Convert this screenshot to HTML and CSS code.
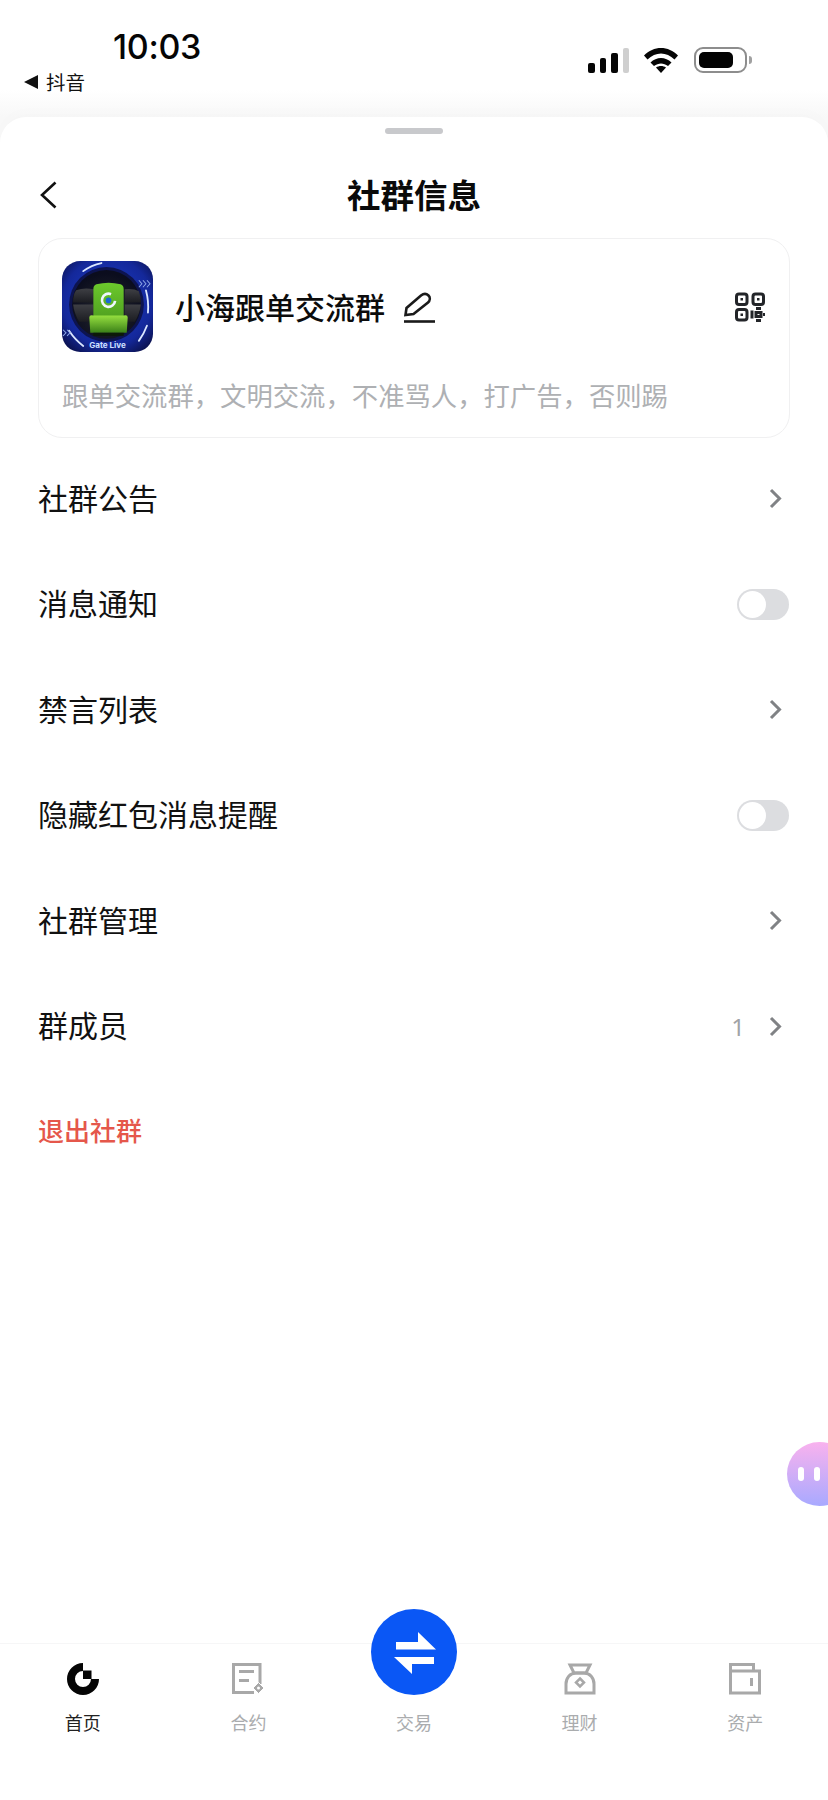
FILE: index.html
```html
<!DOCTYPE html>
<html lang="zh-CN">
<head>
<meta charset="utf-8">
<title>社群信息</title>
<link rel="stylesheet" href="styles.css">
</head>
<body>
<div class="screen">
  <header class="status">
    <div class="status-left">
      <div class="time">10:03</div>
      <div class="backapp"><span class="tri"></span><span>抖音</span></div>
    </div>
    <div class="status-right">
      <div class="signal"><i class="b1"></i><i class="b2"></i><i class="b3"></i><i class="b4"></i></div>
      <svg class="wifi" viewBox="0 0 35 26"><path d="M0.5 8.5C10 -1.5 25 -1.5 34.5 8.5L31 12.5C23 4.5 12 4.5 4 12.5Z"/><path d="M7 15.5C13 9.5 22 9.5 28 15.5L24.5 19C20 15.5 15 15.5 10.5 19Z"/><path d="M12.5 20.5C15.5 18.5 19.5 18.5 22.5 20.5L17.5 26Z"/></svg>
      <div class="battery"><div class="cell"><div class="level"></div></div><div class="nub"></div></div>
    </div>
  </header>

  <main class="sheet">
    <div class="grabber"></div>
    <div class="nav">
      <svg class="back" viewBox="0 0 17 28"><path d="M15.5 1.5L2 14L15.5 26.5"/></svg>
      <h1 class="title">社群信息</h1>
    </div>

    <section class="card">
      <div class="card-top">
        <svg class="avatar" viewBox="0 0 90 90">
          <defs>
            <radialGradient id="bg" cx="50%" cy="45%" r="70%"><stop offset="0" stop-color="#1c3fd0"/><stop offset="0.7" stop-color="#14289a"/><stop offset="1" stop-color="#090d40"/></radialGradient>
            <linearGradient id="seat" x1="0" y1="0" x2="0" y2="1"><stop offset="0" stop-color="#6cc92c"/><stop offset="1" stop-color="#4f9f20"/></linearGradient>
            <linearGradient id="cush" x1="0" y1="0" x2="0" y2="1"><stop offset="0" stop-color="#96e040"/><stop offset="1" stop-color="#3a8018"/></linearGradient>
            <radialGradient id="hall" cx="50%" cy="60%" r="55%"><stop offset="0" stop-color="#26282e"/><stop offset="1" stop-color="#0b0d1e"/></radialGradient>
            <linearGradient id="side" x1="0" y1="0" x2="0" y2="1"><stop offset="0" stop-color="#3e3f44"/><stop offset="1" stop-color="#1c1d22"/></linearGradient>
          </defs>
          <rect width="90" height="90" rx="18" fill="url(#bg)"/>
          <circle cx="44" cy="43" r="37" fill="#0d1450"/>
          <circle cx="44" cy="43" r="34" fill="url(#hall)"/>
          <g fill="url(#side)">
            <path d="M14 29Q22 26 31 28V41H11Q11 33 14 29Z"/>
            <path d="M11 43H31V60H17Q12 52 11 43Z"/>
            <path d="M62 28Q71 27 76 30Q78 35 78 41H62Z"/>
            <path d="M62 43H78Q77 52 72 60H62Z"/>
          </g>
          <path d="M34 23Q46 20 58 23Q61 24 61 28V58H31V28Q31 24 34 23Z" fill="url(#seat)"/>
          <path d="M27 56Q27 53 31 54H61Q65 53 65 56L64 71H28Z" fill="url(#cush)"/>
          <rect x="31" y="71" width="30" height="3" fill="#0c1a08"/>
          <path d="M48.500 32.800A6.500 6.500 0 1 0 52.500 39.500" fill="none" stroke="#eef6ff" stroke-width="2.600"/>
          <circle cx="46" cy="39" r="2.800" fill="#1a66d8"/>
          <g fill="none" stroke="#dbe7ff" stroke-width="1.800" stroke-linecap="round">
            <path d="M21 10Q29 4 39 2"/>
            <path d="M83 29Q86 40 85 51"/>
            <path d="M84 64Q81 72 76 79"/>
            <path d="M7 69Q13 78 21 84"/>
          </g>
          <g fill="none" stroke="#8fa8e8" stroke-width="1">
            <path d="M76 19l3 3.500-3 3.500M80 19l3 3.500-3 3.500M84 19l3 3.500-3 3.500"/>
            <path d="M1 68l3 3-3 3M5 68l3 3-3 3"/>
          </g>
          <text class="avatar-text" x="45" y="86">Gate Live</text>
        </svg>
        <div class="name-wrap">
          <span class="name">小海跟单交流群</span>
          <svg class="pencil" viewBox="0 0 32 32"><path d="M1.500 23L2.500 16L17 3.500C19.500 1.500 22.500 1.500 24.500 3.500C26.500 5.500 26 8.500 24 10.500L9.500 22Z"/><path d="M0 29.500H31"/></svg>
        </div>
        <svg class="qr" viewBox="0 0 30 29">
          <rect x="1.500" y="1.500" width="10.500" height="10.500" rx="2.500"/><rect x="18" y="1.500" width="10.500" height="10.500" rx="2.500"/><rect x="1.500" y="17" width="10.500" height="10.500" rx="2.500"/>
          <path class="dot" d="M5.500 5.500h2.500v2.500h-2.500zM22 5.500h2.500v2.500H22zM5.500 21h2.500v2.500H5.500z"/>
          <path class="thin" d="M17 18v8M21 16h5M21 28h5M21 20h5v4h-5zM28 22h2"/>
        </svg>
      </div>
      <p class="desc">跟单交流群，文明交流，不准骂人，打广告，否则踢</p>
    </section>

    <nav class="rows">
      <div class="row"><span class="label">社群公告</span><svg class="chev" viewBox="0 0 13 21"><path d="M2 2L10.500 10.500L2 19"/></svg></div>
      <div class="row"><span class="label">消息通知</span><div class="toggle"><div class="knob"></div></div></div>
      <div class="row"><span class="label">禁言列表</span><svg class="chev" viewBox="0 0 13 21"><path d="M2 2L10.500 10.500L2 19"/></svg></div>
      <div class="row"><span class="label">隐藏红包消息提醒</span><div class="toggle"><div class="knob"></div></div></div>
      <div class="row"><span class="label">社群管理</span><svg class="chev" viewBox="0 0 13 21"><path d="M2 2L10.500 10.500L2 19"/></svg></div>
      <div class="row"><span class="label">群成员</span><div class="row-end"><span class="count">1</span><svg class="chev" viewBox="0 0 13 21"><path d="M2 2L10.500 10.500L2 19"/></svg></div></div>
      <div class="row row-danger"><span class="label">退出社群</span></div>
    </nav>

    <div class="assistant"><i></i><i></i></div>

    <footer class="tabbar">
      <div class="tab tab-active">
        <svg class="tab-icon" viewBox="0 0 32 32"><path class="solid" d="M16 0A16 16 0 1 0 32 16H24A8 8 0 1 1 16 8Z"/><rect class="solid" x="16" y="7.500" width="8.500" height="8.500"/></svg>
        <span>首页</span>
      </div>
      <div class="tab">
        <svg class="tab-icon" viewBox="0 0 32 32"><path class="outline" d="M22 29.500H1.500V1.500H28V21"/><path class="outline" d="M7 8.500H22M7 17.500H17"/><path class="gem" d="M26.500 19.500L32 25L26.500 30.500L21 25Z"/><circle cx="26.500" cy="25" r="1.500" fill="#fff"/></svg>
        <span>合约</span>
      </div>
      <div class="tab">
        <div class="trade">
          <svg viewBox="0 0 86 86"><path d="M25 33H47V23L65 40.500H25Z"/><path d="M23 48H63V55H41V65Z"/></svg>
        </div>
        <span>交易</span>
      </div>
      <div class="tab">
        <svg class="tab-icon" viewBox="0 0 32 32"><path class="outline" d="M6 2H26L22 10H10Z"/><path class="outline" d="M2 30V21C2 15 6 10 12 10H20C26 10 30 15 30 21V30Z"/><path class="outline thin-o" d="M16 15.500L20 19.500L16 23.500L12 19.500Z"/></svg>
        <span>理财</span>
      </div>
      <div class="tab">
        <svg class="tab-icon" viewBox="0 0 32 32"><path class="outline" d="M1.500 1.500H24.500V8H30.500V30H1.500ZM1.500 8H24.500"/><rect class="fill-grey" x="21" y="15" width="3" height="8"/></svg>
        <span>资产</span>
      </div>
    </footer>
  </main>
</div>
</body>
</html>
```

FILE: styles.css
```css
* { box-sizing: border-box; }
html, body { margin: 0; padding: 0; }
body {
  width: 828px;
  height: 1800px;
  overflow: hidden;
  background: #fff;
  font-family: "Noto Sans CJK SC", "Noto Sans", sans-serif;
  color: #0b0b0b;
}
.screen {
  position: relative;
  width: 828px;
  height: 1800px;
  display: flex;
  flex-direction: column;
  overflow: hidden;
  background: linear-gradient(#fff 0, #fff 90px, #f8f8f8 117px);
}

/* status bar */
.status {
  height: 117px;
  flex: none;
  display: flex;
  justify-content: space-between;
}
.status-left { padding-left: 24px; }
.time {
  margin: 27px 0 0 89px;
  font-family: Inter, "Liberation Sans", sans-serif;
  font-size: 34px;
  line-height: 40px;
  font-weight: 500;
  letter-spacing: -0.3px;
  color: #050505;
}
.backapp {
  margin-top: 2px;
  display: flex;
  align-items: center;
  gap: 8px;
  font-size: 19.500px;
  line-height: 26px;
  color: #111;
}
.tri {
  width: 0;
  height: 0;
  border-style: solid;
  border-width: 7px 14px 7px 0;
  border-color: transparent #111 transparent transparent;
}
.status-right {
  display: flex;
  align-items: flex-start;
  padding: 47px 76px 0 0;
}
.signal {
  display: flex;
  align-items: flex-end;
  gap: 5px;
  height: 26px;
}
.signal i { width: 6.500px; border-radius: 2px; background: #050505; display: block; }
.signal .b1 { height: 10px; }
.signal .b2 { height: 15px; }
.signal .b3 { height: 20px; }
.signal .b4 { height: 25px; background: #cfcfcf; }
.wifi { width: 36px; height: 26px; margin-left: 14px; fill: #050505; }
.battery { display: flex; align-items: center; margin-left: 15px; height: 26px; }
.cell {
  width: 53px;
  height: 26px;
  border: 2px solid #8d8d8d;
  border-radius: 9px;
  padding: 3px;
}
.level { width: 34px; height: 100%; background: #030303; border-radius: 5px; }
.nub { width: 3px; height: 8px; margin-left: 2px; background: #a0a0a0; border-radius: 0 3px 3px 0; }

/* sheet */
.sheet {
  position: relative;
  flex: 1;
  display: flex;
  flex-direction: column;
  background: #fff;
  border-radius: 26px 26px 0 0;
  box-shadow: 0 -6px 14px rgba(0, 0, 0, 0.012);
}
.grabber {
  width: 58px;
  height: 6px;
  margin: 11px auto 0;
  border-radius: 3px;
  background: #c8c9cc;
}
.nav {
  position: relative;
  height: 66px;
  margin-top: 29px;
  margin-bottom: 9px;
  display: flex;
  align-items: center;
  justify-content: center;
}
.back {
  position: absolute;
  left: 40px;
  top: 18px;
  width: 17px;
  height: 28px;
  fill: none;
  stroke: #111;
  stroke-width: 2.600;
}
.title {
  margin: 0;
  padding-bottom: 4px;
  font-size: 33.500px;
  line-height: 46px;
  font-weight: 700;
  color: #0a0a0a;
}

/* card */
.card {
  flex: none;
  height: 200px;
  margin: 0 38.500px 0 38px;
  padding: 22px 23px 0;
  border: 1.500px solid #f0f0f1;
  border-radius: 24px;
}
.card-top {
  display: flex;
  align-items: center;
}
.avatar { width: 91px; height: 91px; flex: none; display: block; }
.avatar-text {
  font-family: Inter, "Liberation Sans", sans-serif;
  font-size: 8px;
  font-weight: 700;
  fill: #cfe0ff;
  text-anchor: middle;
}
.name-wrap {
  flex: 1;
  display: flex;
  align-items: center;
  margin-left: 22px;
  margin-bottom: 2px;
}
.name {
  font-size: 30px;
  line-height: 42px;
  font-weight: 500;
  color: #0c0c0c;
}
.pencil {
  width: 32px;
  height: 32px;
  margin: 4px 0 0 19px;
  fill: none;
  stroke: #1a1a1a;
  stroke-width: 2.600;
}
.qr {
  width: 30px;
  height: 30px;
  flex: none;
  margin-right: 1px;
  fill: none;
  stroke: #232529;
  stroke-width: 3;
}
.qr .dot { fill: #232529; stroke: none; }
.qr .thin { stroke-width: 3; }
.desc {
  margin: 25px 0 0;
  font-size: 26.350px;
  line-height: 36px;
  color: #aeb0b3;
  white-space: nowrap;
}

/* rows */
.rows { flex: none; margin-top: 8px; }
.row {
  height: 105.500px;
  padding: 0 39px 0 38px;
  display: flex;
  align-items: center;
  justify-content: space-between;
  font-size: 30px;
  color: #111;
}
.label { padding-bottom: 4px; }
.chev {
  width: 13px;
  height: 21px;
  margin-right: 7px;
  fill: none;
  stroke: #808285;
  stroke-width: 3;
  display: block;
}
.row-end { display: flex; align-items: center; gap: 24px; }
.count {
  font-family: "Noto Sans", sans-serif;
  font-size: 24px;
  color: #a1a3a6;
}
.toggle {
  width: 52px;
  height: 31px;
  padding: 2px;
  border-radius: 16px;
  background: #dcdde0;
}
.knob {
  width: 27px;
  height: 27px;
  border-radius: 50%;
  background: #fff;
}
.row-danger { font-size: 26px; font-weight: 500; color: #e5574b; }

/* floating assistant */
.assistant {
  position: absolute;
  right: -24px;
  top: 1325px;
  width: 65px;
  height: 64px;
  border-radius: 50%;
  padding-left: 11px;
  display: flex;
  align-items: center;
  gap: 10px;
  background: linear-gradient(#f9b2ee, #a8a9ff);
}
.assistant i { width: 6px; height: 14px; border-radius: 3px; background: #fff; display: block; }

/* tab bar */
.tabbar {
  margin-top: auto;
  height: 157px;
  flex: none;
  display: grid;
  grid-template-columns: repeat(5, 1fr);
  border-top: 1.500px solid #f6f6f7;
  padding-top: 19px;
}
.tab {
  display: flex;
  flex-direction: column;
  align-items: center;
  font-size: 18px;
  line-height: 24px;
  color: #aaacae;
}
.tab span { margin-top: 15px; }
.tab-active { color: #222; }
.tab-icon { width: 32px; height: 32px; display: block; }
.solid { fill: #050505; }
.outline { fill: none; stroke: #a8a8a8; stroke-width: 3; }
.outline.thin-o { stroke-width: 2.500; }
.gem { fill: #a8a8a8; stroke: #fff; stroke-width: 1; }
.fill-grey { fill: #a8a8a8; }
.trade {
  position: relative;
  width: 86px;
  height: 86px;
  margin-top: -54px;
  border-radius: 50%;
  background: #0a57f5;
}
.trade svg { width: 86px; height: 86px; display: block; fill: #fff; }
```
